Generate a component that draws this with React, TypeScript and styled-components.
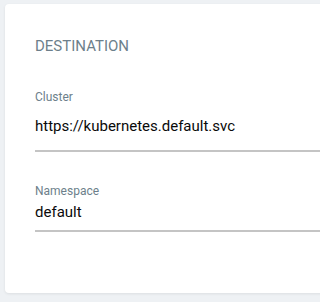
import styled, { createGlobalStyle } from "styled-components";

const GlobalStyle = createGlobalStyle`
  html, body {
    margin: 0;
    padding: 0;
    background: #eef1f4;
    font-family: Roboto, "Liberation Sans", sans-serif;
    overflow: hidden;
  }
`;

const Page = styled.div`
  padding: 4px 0 0 5px;
  height: 302px;
  box-sizing: border-box;
  overflow: hidden;
`;

const Card = styled.section`
  width: calc(100vw + 20px);
  height: 289px;
  box-sizing: border-box;
  padding: 32px 0 32px 30px;
  background: #fff;
  border-radius: 4px;
  box-shadow: 0 1px 3px rgba(0, 0, 0, 0.08);
`;

const Title = styled.h3`
  margin: 0;
  font-size: 15px;
  line-height: 20px;
  font-weight: 400;
  color: #6d7f8b;
  text-transform: uppercase;
`;

const Field = styled.div<{ $gap: number }>`
  margin-top: ${(p) => p.$gap}px;
`;

const Label = styled.label`
  display: block;
  font-size: 12px;
  line-height: 16px;
  color: #6d7f8b;
`;

const Value = styled.div<{ $top: number; $bottom: number }>`
  padding: ${(p) => p.$top}px 0 ${(p) => p.$bottom}px;
  font-size: 15px;
  line-height: 20px;
  color: #0a0a0a;
  border-bottom: 2px solid #c4c4c4;
`;

export default function App() {
  return (
    <>
      <GlobalStyle />
      <Page>
        <Card>
          <Title>Destination</Title>
          <Field $gap={33}>
            <Label>Cluster</Label>
            <Value $top={11} $bottom={14}>https://kubernetes.default.svc</Value>
          </Field>
          <Field $gap={31}>
            <Label>Namespace</Label>
            <Value $top={3} $bottom={8}>default</Value>
          </Field>
        </Card>
      </Page>
    </>
  );
}
